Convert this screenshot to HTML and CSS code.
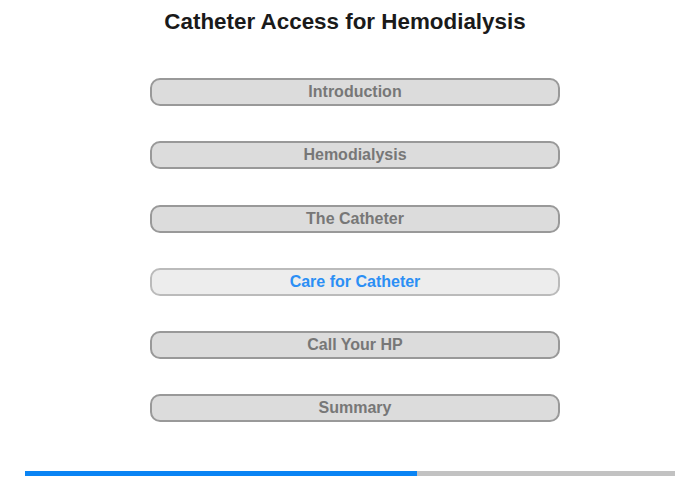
FILE: index.html
```html
<!DOCTYPE html>
<html lang="en">
<head>
  <meta charset="UTF-8">
  <title>Catheter Access for Hemodialysis</title>
  <link rel="stylesheet" href="styles.css">
</head>
<body>
  <div class="page">
    <h1 class="title">Catheter Access for Hemodialysis</h1>
    <nav class="menu">
      <a class="item" href="#">Introduction</a>
      <a class="item" href="#">Hemodialysis</a>
      <a class="item" href="#">The Catheter</a>
      <a class="item active" href="#">Care for Catheter</a>
      <a class="item" href="#">Call Your HP</a>
      <a class="item" href="#">Summary</a>
    </nav>
    <div class="progress">
      <div class="progress-fill" style="width: 60.3%"></div>
    </div>
  </div>
</body>
</html>
```

FILE: styles.css
```css
body {
  margin: 0;
  padding: 0;
  font-family: "Liberation Sans", Arial, sans-serif;
  background: #fff;
}
.page {
  width: 700px;
  height: 480px;
  display: flex;
  flex-direction: column;
}
.title {
  margin: 9px 10px 0 0;
  font-size: 22.4px;
  line-height: 26px;
  text-align: center;
  color: #1a1a1a;
}
.menu {
  display: flex;
  flex-direction: column;
  gap: 35.3px;
  width: 410px;
  margin: 43px 0 0 150px;
}
.item {
  box-sizing: border-box;
  height: 28px;
  border: 2px solid #999;
  border-radius: 10px;
  background: #dcdcdc;
  color: #777;
  font-size: 16px;
  font-weight: bold;
  line-height: 24px;
  text-align: center;
  text-decoration: none;
}
.item.active {
  background: #ededed;
  border-color: #bbb;
  color: #2b8ff5;
}
.progress {
  margin: 49px 0 0 25px;
  width: 650px;
  height: 5px;
  background: #c2c2c2;
}
.progress-fill {
  height: 100%;
  background: #0a84f4;
}
```
